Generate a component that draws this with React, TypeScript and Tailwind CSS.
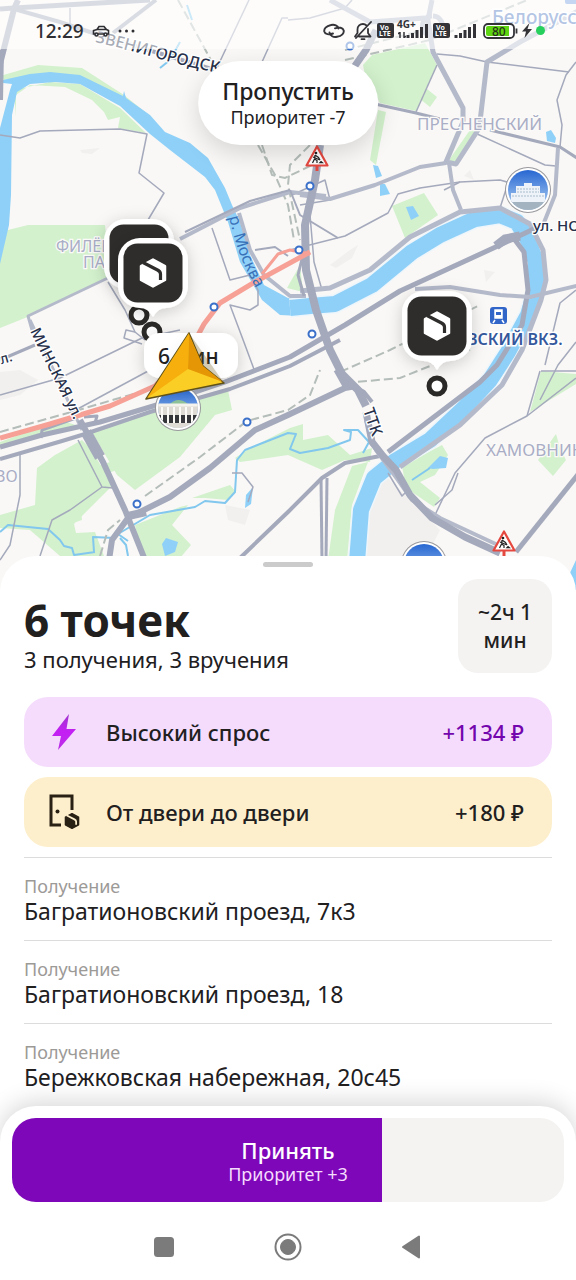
import type { ReactNode } from "react";

const park = "#d3f1cd";
const water = "#8fd0f8";
const road = "#a4a9bc";
const roadLight = "#b5bacb";

const parks = [
  "0,76 38,65 82,68 124,95 150,116 110,100 80,76 50,73 4,80",
  "16,117 16,95 30,85 65,87 92,100 104,112 108,120 120,117 118,128 146,133 120,108 80,84 50,82 14,90",
  "0,232 28,225 105,225 110,277 30,316 0,328",
  "363,65 372,55 425,43 437,65 416,111 380,103 365,75",
  "427,89 437,97 430,107 420,99",
  "378,110 386,112 376,165 370,160",
  "470,130 478,132 456,165 449,160",
  "392,206 424,193 438,215 405,238",
  "300,265 303,292 287,288",
  "92,432 155,408 215,392 228,390 232,410 215,415 180,457 135,490 117,475",
  "0,442 60,420 85,428 40,436 0,448",
  "0,515 35,505 37,468 55,455 82,440 92,450 112,486 74,524 76,533 95,532 104,556 60,556 30,530 0,528",
  "135,525 180,507 188,505 172,525 191,545 180,558 142,558",
  "192,498 230,485 236,492 228,500 205,498",
  "235,458 250,448 290,428 303,424 303,440 328,435 350,455 372,448 370,462 345,460 322,470 288,455 240,462",
  "352,466 368,462 352,505 347,560 328,560 335,510",
  "402,466 442,445 448,455 435,475 420,482 440,498 434,507 406,488",
  "541,371 576,374 576,384 530,412",
  "553,438 556,434 560,448 566,460 553,476 538,460",
];

const tints = [
  "80,150 100,148 92,154 82,153",
  "330,265 350,250 358,245 352,258 336,268",
  "380,470 365,500 364,560 425,560 440,530 400,490",
  "470,170 474,180 464,176",
  "484,270 495,272 486,282",
  "225,505 250,510 245,525 228,520",
  "0,372 20,370 38,380 20,395 0,400",
];

const thinRoads = [
  "0,135 20,138 40,131 120,129 147,134 139,173 164,193 148,220",
  "249,0 214,74", "288,18 282,18 262,62", "70,8 70,28",
  "288,20 310,18 345,8 352,0",
  "437,54 460,56 487,62 569,72", "437,65 416,112",
  "576,62 566,75 557,100 562,125 560,147",
  "475,133 545,165 556,166",
  "444,190 460,182 500,180 528,188",
  "509,180 500,208",
  "282,252 345,236 388,213 398,194 420,188 460,182",
  "212,228 230,280 250,275 258,290 258,305 250,310 230,305 245,345 255,372",
  "108,282 125,310 135,332 145,340", "135,332 126,330 124,338 142,344",
  "0,395 60,378 142,338 180,330", "72,412 150,370",
  "20,455 20,495 10,545 0,560",
  "78,440 102,487 113,488", "102,487 70,510 52,520 40,556",
  "232,473 242,473 253,487 248,502",
  "540,371 527,416", "541,371 576,371", "576,342 558,365 540,400",
  "576,290 560,303 545,365", "435,515 455,473 485,438 527,416 576,378",
  "458,473 452,490 435,505", "388,473 402,496 406,492",
  "292,195 325,180 330,200 300,205", "310,215 314,262 322,290",
];

const roads: { p: string; w: number; c?: string }[] = [
  { p: "0,9 14,8 150,0", w: 5 }, { p: "18,0 14,9 0,64", w: 6 }, { p: "1,50 0,100", w: 6 },
  { p: "14,9 60,22 105,37 215,70", w: 4 }, { p: "156,0 113,33", w: 4 },
  { p: "376,30 366,50 352,70 340,90", w: 7 },
  { p: "432,0 428,20 433,52 463,108 463,122 446,162 456,164 478,130", w: 5, c: roadLight },
  { p: "330,0 370,22 425,18", w: 5, c: roadLight },
  { p: "446,163 420,167 375,185 330,199 300,195", w: 4, c: roadLight },
  { p: "449,163 453,190 461,210", w: 4, c: roadLight },
  { p: "479,130 487,62 520,42 580,10", w: 5, c: roadLight },
  { p: "375,104 416,113 440,119", w: 3 }, { p: "490,130 560,147 580,160", w: 3 },
  { p: "558,148 555,195 543,225", w: 4, c: roadLight },
  { p: "180,239 240,208 290,192 326,196", w: 4, c: roadLight },
  { p: "185,232 250,201 290,190", w: 2 },
  { p: "239,213 250,250 264,275 290,296 306,296", w: 4, c: roadLight },
  { p: "255,250 275,247 288,256", w: 2 },
  { p: "290,190 300,215 338,238", w: 2 },
  { p: "110,277 28,316 32,330", w: 3, c: roadLight },
  { p: "30,320 70,405 82,430", w: 3, c: roadLight }, { p: "0,360 35,345", w: 3 },
  { p: "300,291 330,288 370,270 410,237 460,212 500,208 530,224 543,250 546,280 541,300 522,350 502,385 460,425 400,467", w: 5, c: roadLight },
  { p: "512,236 524,252 528,290 522,325 497,365 480,382 430,420 388,452", w: 5 },
  { p: "415,289 450,287 500,295 530,297 580,285", w: 4, c: roadLight },
  { p: "0,447 42,435 100,422 160,404 225,382 290,357 345,325 400,291 500,245 540,226", w: 5 },
  { p: "0,459 62,441 85,434 150,412 230,389 290,366 340,340", w: 4 },
  { p: "496,246 505,239 520,236", w: 9 },
  { p: "41,438 42,430 76,418", w: 3 }, { p: "95,423 97,416 84,417", w: 3 },
  { p: "80,420 92,442 103,462 125,510 145,560", w: 6 }, { p: "86,432 100,457", w: 11 },
  { p: "109,560 112,540 128,518 170,497 210,468 255,430 288,415 345,388 356,386", w: 6 },
  { p: "128,516 146,512", w: 8 },
  { p: "380,456 345,463 322,478 288,512 240,558", w: 4 },
  { p: "321,478 322,560", w: 3 }, { p: "327,478 326,560", w: 3 },
  { p: "580,472 516,552", w: 5 },
  { p: "366,420 376,450 398,480 412,500 440,518 500,546", w: 4, c: roadLight },
  { p: "336,370 345,386 352,387", w: 5 },
  { p: "320,145 315,180 305,225 306,270 316,310 330,350 342,374 358,390 366,406", w: 8 },
  { p: "303,255 298,275 304,296", w: 3 },
  { p: "366,412 372,442 383,456 396,470 410,495 432,518 465,537 500,553", w: 7 },
  { p: "372,402 364,392 354,386", w: 4 },
];

const dashes = [
  "178,0 212,62", "258,145 275,175 288,205 294,240", "262,145 272,175 285,178 312,165",
  "310,145 290,165 288,185 300,240", "345,60 430,40 576,-20", "345,50 425,30",
  "0,432 75,411 140,392", "145,496 200,457 247,421 288,410 310,395 320,370",
  "340,372 390,350 480,305", "345,383 400,378 470,350", "100,556 108,530 120,520",
];

const stations = [[350, 46], [310, 186], [299, 250], [214, 307], [312, 334], [247, 422], [137, 504]];

function Road({ p, w, c = road }: { p: string; w: number; c?: string }) {
  return <polyline points={p} fill="none" stroke={c} strokeWidth={w} strokeLinejoin="round" />;
}

function Cube({ x, y, s = 1, line = "#2f2d2b", fill = "#fff" }: { x: number; y: number; s?: number; line?: string; fill?: string }) {
  return (
    <g transform={`translate(${x} ${y}) scale(${s})`}>
      <path d="M0 -13.5L12 -7V7L0 13.5L-12 7V-7Z" fill={fill} stroke={fill} strokeWidth="2.5" strokeLinejoin="round" />
      <path d="M-10 -10.5L4.500 -3Q7.500 -1.500 7.500 1V7" fill="none" stroke={line} strokeWidth="3.2" />
    </g>
  );
}

function Pin({ x, y, cube = true }: { x: number; y: number; cube?: boolean }) {
  return (
    <g>
      <path
        filter="url(#shadow)"
        d={`M${x - 35} ${y - 13}a22 22 0 0 1 22 -22h26a22 22 0 0 1 22 22v26a22 22 0 0 1 -22 22q-8 0 -13 9q-5 -9 -13 -9a22 22 0 0 1 -22 -22z`}
        fill="#fff"
      />
      <rect x={x - 29.5} y={y - 29.5} width="59" height="59" rx="14" fill="#2f2d2b" />
      {cube && <Cube x={x} y={y} />}
    </g>
  );
}

function Landmark({ x, y, children }: { x: number; y: number; children?: ReactNode }) {
  return (
    <g transform={`translate(${x} ${y})`}>
      <circle r="23" fill="#98989c" />
      <circle r="22" fill="#fff" />
      <circle r="20" fill="url(#sky)" />
      <g clipPath="url(#disc)">{children}</g>
    </g>
  );
}

function Roadwork({ x, y }: { x: number; y: number }) {
  return (
    <g transform={`translate(${x} ${y})`}>
      <path d="M0 9V14" stroke="#e5483f" strokeWidth="3" />
      <path d="M0 -10.500L10.500 8.500H-10.500Z" fill="#fff" stroke="#e5483f" strokeWidth="2.200" strokeLinejoin="round" />
      <circle cx="-1" cy="-4" r="1.300" fill="#222" />
      <path d="M-2 -2L1.500 0.500L3 3M-2 -2L-2.500 2L-4.500 6M-2.500 2L0 3.500V6M-4 0L3 3" fill="none" stroke="#222" strokeWidth="1.200" />
      <path d="M1.500 6.200L4 3.800L7 6.200Z" fill="#222" />
    </g>
  );
}

function CityMap() {
  return (
    <svg viewBox="0 0 576 590" className="block w-full font-['Noto_Sans',sans-serif]" role="img" aria-label="Карта">
      <defs>
        <filter id="shadow" x="-50%" y="-50%" width="200%" height="200%">
          <feDropShadow dx="0" dy="3" stdDeviation="8" floodColor="#000" floodOpacity="0.18" />
        </filter>
        <linearGradient id="sky" x1="0" y1="0" x2="0" y2="1">
          <stop offset="0" stopColor="#2867d2" />
          <stop offset="1" stopColor="#b4d5f5" />
        </linearGradient>
        <clipPath id="disc"><circle r="20" /></clipPath>
        <path id="zven" d="M95 42Q130 50 160 59T235 76" />
        <path id="moscow" d="M229 217C236 245 241 262 258 292" />
        <path id="minsk" d="M30 331L76 424" />
        <path id="ttk" d="M363 410L375 445" />
      </defs>

      <rect width="576" height="590" fill="#f9f8f6" />
      {tints.map((p) => <polygon key={p} points={p} fill="#f2f0ee" />)}
      {parks.map((p) => <polygon key={p} points={p} fill={park} />)}
      <polygon points="110,462 118,470 100,475 88,505 80,500 82,520 76,522 70,500 84,470" fill={park} />

      <g fill={water}>
        <path d="M3 80L30 74L50 72L80 75L123 96L124 91L126 98L150 115L165 132L190 143L208 158L225 188L232 205L240 222L250 255L264 285L288 298L300 300V316L280 315L262 300L240 262L228 222L215 190L205 177L170 150L150 134L120 106L80 84L55 82L30 84L17 92L12 115L11 195L9 225L0 264V128L10 90L12 84L3 83Z" />
        <polygon points="373,165 378,166 382,176 376,178" />
        <polygon points="380,184 385,184 390,194 380,196" />
        <polygon points="406,207 413,206 419,216 411,220" />
        <polygon points="546,132 551,130 556,138 555,143 547,141" />
        <polygon points="162,544 166,538 178,542 175,552 165,556" />
        <polygon points="246,495 253,487 251,504 245,508" />
        <polygon points="428,468 440,456 448,458 446,468 433,469" />
        <polygon points="562,590 576,560 576,590" />
      </g>
      <g fill="none" strokeLinejoin="round">
        <path d="M290 308L310 306L335 304L372 285L412 252L440 235L475 219L500 215L517 222L528 240L536 262V288L528 315L508 352L490 380L465 407L430 440L395 461L374 478L361 510L357 562" stroke="#eef6fb" strokeWidth="19" />
        <path d="M290 308L310 306L335 304L372 285L412 252L440 235L475 219L500 215L517 222L528 240L536 262V288L528 315L508 352L490 380L465 407L430 440L395 461L374 478L361 510L357 562" stroke={water} strokeWidth="16" />
        <path d="M0 532L8 525L48 529L60 540L64 546L72 548L74 555L95 552M118 534L128 541M94 552L93 537L115 538M118 534L150 515L195 507L205 501L225 503L235 492L237 460L245 450L288 433L296 434L290 449L300 453L328 448L350 440L351 432L344 430L358 430L369 442L363 453M412 480L430 468M120 538L126 545L128 556M160 68L170 60L180 42M187 5L192 20" stroke="#81c7ee" strokeWidth="2" />
      </g>

      {thinRoads.map((p) => <Road key={p} p={p} w={1.5} />)}
      {dashes.map((p) => (
        <polyline key={p} points={p} fill="none" stroke="#b4bdb9" strokeWidth="2" strokeDasharray="9 4" />
      ))}
      {roads.map((r) => <Road key={r.p} {...r} />)}
      <path d="M433 16A10 10 0 1 1 432 16" stroke={roadLight} strokeWidth="5" fill="none" />
      <g fill="none" stroke="#f6a096" strokeLinejoin="round">
        <path d="M0 438L50 424L110 406L155 386L190 350L204 324L220 303L255 282L310 252" strokeWidth="5" />
        <path d="M262 274L278 254L290 250L310 254" strokeWidth="3" />
      </g>
      {stations.map(([x, y]) => (
        <circle key={`${x}-${y}`} cx={x} cy={y} r="3.500" fill="#fff" stroke="#3a70c9" strokeWidth="2" />
      ))}

      <g fill="#a9adc5" stroke="#fbfaf9" strokeWidth="2.500" paintOrder="stroke" fontSize="17">
        <text x="417" y="130">ПРЕСНЕНСКИЙ</text>
        <text x="486" y="456">ХАМОВНИКИ</text>
        <text x="56" y="252" fontSize="16">ФИЛЁВСКИЙ</text>
        <text x="83" y="268" fontSize="16">ПАРК</text>
        <text x="-5" y="482" fontSize="16">ВО</text>
      </g>
      <g fill="#27304a" stroke="#fff" strokeWidth="2.500" paintOrder="stroke" fontSize="15" fontWeight="500">
        <text fontSize="16"><textPath href="#zven">ЗВЕНИГОРОДСК</textPath></text>
        <text><textPath href="#minsk">МИНСКАЯ ул.</textPath></text>
        <text fontSize="16"><textPath href="#ttk">ТТК</textPath></text>
        <text x="533" y="231">ул. НОВЫЙ</text>
        <text transform="translate(-5 366) rotate(-16)" fontSize="14">ул.</text>
      </g>
      <text fontSize="16" fill="#3870b8"><textPath href="#moscow">р. Москва</textPath></text>
      <g fill="#35589c" stroke="#fff" strokeWidth="3" paintOrder="stroke" fontWeight="600">
        <text x="492" y="24" fontSize="19" fontWeight="500" fill="#4470bc">Белорусская</text>
        <text x="467" y="345" fontSize="16">ВСКИЙ ВКЗ.</text>
      </g>
      <rect x="490" y="307" width="17" height="17" rx="3" fill="#3265c8" />
      <path d="M495 310h7v8h-7zM495 320l-2 3M502 320l2 3" fill="#fff" stroke="#fff" strokeWidth="1.500" />
      <path d="M496 312h5v3h-5z" fill="#3265c8" />
      <rect x="565" y="-4" width="14" height="8" rx="2" fill="#6f9ae0" />

      <Roadwork x={317} y={157} />
      <Roadwork x={504} y={542} />
      <Landmark x={528} y={190}>
        <path d="M-20 10H20V20H-20Z" fill="#a4b3c0" />
        <path d="M-12 -4H12V11H-12ZM-17 3H17V12H-17Z" fill="#edf3f8" />
        <path d="M-4 -7H4V-4H-4Z" fill="#edf3f8" />
        <path d="M-11 -1H11M-11 2H11M-16 6H16" stroke="#a9bccc" strokeWidth="1" strokeDasharray="2 1" />
      </Landmark>
      <Landmark x={178} y={408}>
        <path d="M-8 -4Q0 -12 10 -4Z" fill="#8fc39a" />
        <path d="M-20 -4H20V20H-20Z" fill="#dedbd4" />
        <path d="M-20 7H20V15H-20Z" fill="#34363a" />
        <path d="M-16 -1V15M-10 -1V15M-4 -1V15M2 -1V15M8 -1V15M14 -1V15" stroke="#fbfaf6" strokeWidth="2" />
        <path d="M-20 -3H20" stroke="#f5f3ee" strokeWidth="3" />
      </Landmark>
      <Landmark x={424} y={564} />

      <g fill="#fff" stroke="#2b2927" strokeWidth="5">
        <circle cx="139" cy="315" r="8" />
        <circle cx="152" cy="332" r="8" />
        <circle cx="437" cy="386" r="8" />
      </g>
      <Pin x={139} y={254} cube={false} />
      <Pin x={153} y={273} />
      <Pin x={437} y={326} />

      <rect x="144" y="333" width="94" height="45" rx="16" fill="#fff" filter="url(#shadow)" />
      <text x="158" y="364" fontSize="21" fontWeight="500" fill="#21201f">6 мин</text>
      <g strokeLinejoin="round">
        <path d="M189 333L146 399L224 383Z" fill="#6b5413" opacity="0.300" filter="url(#shadow)" />
        <path d="M189 333L203 366L224 383L146 399Z" fill="#fbce26" stroke="#5f5118" strokeWidth="1.500" />
        <path d="M189 333L188 369L147 398Z" fill="#f6af0c" />
        <path d="M189 334L203 366L223 382L188 369Z" fill="#e59604" />
      </g>
    </svg>
  );
}

function Volte() {
  return (
    <svg width="17" height="15" viewBox="0 0 17 15" aria-hidden="true">
      <rect width="17" height="15" rx="2" fill="#333338" />
      <g fill="#fff" fontSize="7" fontWeight="700" fontFamily="Noto Sans, sans-serif">
        <text x="3" y="7">Vo</text>
        <text x="2" y="13">LTE</text>
      </g>
    </svg>
  );
}

function Bars() {
  return (
    <svg width="23" height="15" viewBox="0 0 23 15" aria-hidden="true">
      <path d="M2 15V12M6.500 15V10M11 15V7M15.500 15V4M20.500 15V1" stroke="#333338" strokeWidth="3" />
    </svg>
  );
}

function StatusBar() {
  return (
    <div className="absolute inset-x-0 top-0 flex h-[49px] items-center justify-between bg-white/60 pr-[31px] pl-[35px] pt-3">
      <div className="flex items-center gap-2 text-[#2f2f33]">
        <span className="text-[19px] leading-6 font-medium">12:29</span>
        <svg width="18" height="12" viewBox="0 0 18 12" fill="none" stroke="currentColor" strokeWidth="1.600" aria-hidden="true">
          <path d="M3 9H1.500V5.500L5 4.500L7 1.500H12L14.500 4.500L16.500 5.500V9H15M6 9H12M5 4.500H14" />
          <circle cx="4.500" cy="9.500" r="1.500" />
          <circle cx="13.500" cy="9.500" r="1.500" />
        </svg>
        <svg width="17" height="4" viewBox="0 0 17 4" fill="currentColor" aria-hidden="true">
          <circle cx="2" cy="2" r="1.500" /><circle cx="8.500" cy="2" r="1.500" /><circle cx="15" cy="2" r="1.500" />
        </svg>
      </div>
      <div className="flex items-center gap-1">
        <svg width="22" height="16" viewBox="0 0 22 16" fill="none" stroke="#333338" strokeWidth="1.900" strokeLinecap="round" className="mr-1" aria-hidden="true">
          <path d="M15.500 5.500C15 2.500 11.500 1.200 8 2C3 3 0.800 6 1.300 8.500C2 11.500 6 12 10 10.500" />
          <path d="M6.500 9.500C7 13 10.500 14.500 14 13.800C19 13 21.200 10 20.700 7.500C20 4.500 16 4 12 5.300" />
        </svg>
        <svg width="20" height="19" viewBox="0 0 20 19" fill="none" stroke="#333338" strokeWidth="1.800" strokeLinecap="round" aria-hidden="true">
          <path d="M6 15.500H17M2 15.500L4.500 12V8.500C4.500 5 7 3 10 3C11.500 3 12.500 3.500 13.500 4.500M15 8V12L17.500 15.500M8.500 18.200H11.500M18 1L3 17" />
        </svg>
        <Volte />
        <div className="relative flex h-[15px] items-end pl-2">
          <span className="absolute -top-1 -left-px text-[10px] leading-none font-bold text-[#333338]">4G+</span>
          <svg width="8" height="6" viewBox="0 0 8 6" className="absolute bottom-0 left-0" aria-hidden="true">
            <path d="M2 0V6M0 2L2 0M6 0V6M8 4L6 6" stroke="#333338" strokeWidth="1.500" />
          </svg>
          <Bars />
        </div>
        <Volte />
        <Bars />
        <svg width="35" height="16" viewBox="0 0 35 16" className="ml-0.5" aria-hidden="true">
          <rect x="1" y="1" width="30" height="14" rx="4" fill="#fff" stroke="#333338" strokeWidth="1.800" />
          <path d="M3 5a2 2 0 0 1 2 -2H26V13H5a2 2 0 0 1 -2 -2Z" fill="#5fd412" />
          <path d="M33.500 5.500V10.500" stroke="#333338" strokeWidth="1.800" />
          <text x="9" y="12.500" fontSize="12" fontWeight="500" fill="#24301c" fontFamily="Noto Sans, sans-serif">80</text>
        </svg>
        <svg width="10" height="15" viewBox="0 0 10 15" aria-hidden="true">
          <path d="M7.500 0L0 8.500H4L2.500 15L10 6H5.500Z" fill="#333338" />
        </svg>
        <span className="h-[9px] w-[9px] rounded-full bg-[#27cf5d]" />
      </div>
    </div>
  );
}

function Bonus({ icon, label, amount, tone }: { icon: ReactNode; label: string; amount: string; tone: string }) {
  return (
    <li className={`flex h-[70px] items-center rounded-[24px] pr-7 pl-6 ${tone}`}>
      <span className="flex w-[58px] shrink-0">{icon}</span>
      <span className="grow text-[22px] leading-7 font-medium text-[#21201f]">{label}</span>
      <span className="text-[22px] leading-7 font-medium">{amount}</span>
    </li>
  );
}

const stops = [
  "Багратионовский проезд, 7к3",
  "Багратионовский проезд, 18",
  "Бережковская набережная, 20с45",
];

export default function App() {
  return (
    <div className="flex min-h-screen flex-col bg-white font-['Noto_Sans',sans-serif] text-[#21201f]">
      <header className="relative">
        <CityMap />
        <StatusBar />
        <button
          type="button"
          className="absolute top-[61px] left-1/2 flex h-[84px] -translate-x-1/2 flex-col items-center justify-center rounded-full bg-white px-6 whitespace-nowrap shadow-[0_8px_24px_rgba(0,0,0,0.14)]"
        >
          <span className="text-[23px] leading-7 font-medium">Пропустить</span>
          <span className="text-[18px] leading-6">Приоритет -7</span>
        </button>
      </header>

      <main className="relative -mt-[34px] rounded-t-[36px] bg-white px-6">
        <div className="mx-auto mt-1.5 h-[5px] w-[50px] rounded-full bg-[#cbcbcb]" />
        <div className="mt-3 flex items-start justify-between">
          <div className="pt-4">
            <h1 className="text-[44px] leading-[50px] font-bold">6 точек</h1>
            <p className="text-[22px] leading-7">3 получения, 3 вручения</p>
          </div>
          <p className="flex h-[94px] w-[94px] items-center justify-center rounded-[20px] bg-[#f4f3f2] px-3 text-center text-[21px] leading-7 font-medium">
            ~2ч 1 мин
          </p>
        </div>
        <ul className="mt-6 flex flex-col gap-2.5">
          <Bonus
            tone="bg-[#f5dcfd] text-[#7306ad]"
            label="Высокий спрос"
            amount="+1134 ₽"
            icon={
              <svg width="32" height="40" viewBox="0 0 32 40" aria-hidden="true">
                <defs>
                  <linearGradient id="bolt" x1="0" y1="0" x2="0" y2="1">
                    <stop offset="0" stopColor="#9f35cc" /><stop offset="0.500" stopColor="#c41ff4" /><stop offset="1" stopColor="#b92fe4" />
                  </linearGradient>
                </defs>
                <path d="M21 2L4 24H13L10 38L28 17H18.500Z" fill="url(#bolt)" />
              </svg>
            }
          />
          <Bonus
            tone="bg-[#fdefcb] text-[#21201f]"
            label="От двери до двери"
            amount="+180 ₽"
            icon={
              <svg width="34" height="38" viewBox="0 0 34 38" aria-hidden="true">
                <path d="M13 32H3V3H24V17" fill="none" stroke="#2a2115" strokeWidth="3" />
                <circle cx="9.500" cy="18.500" r="2" fill="#2a2115" />
                <Cube x={24} y={28} s={0.55} fill="#2a2115" line="#fdefcb" />
              </svg>
            }
          />
        </ul>
        <ol className="mt-2.5">
          {stops.map((stop) => (
            <li key={stop} className="border-t border-[#dcdcdc] pt-4 pb-4">
              <p className="text-[18px] leading-6 text-[#9c9a97]">Получение</p>
              <p className="text-[23px] leading-[26px]">{stop}</p>
            </li>
          ))}
        </ol>
      </main>

      <footer className="relative grow rounded-t-[36px] bg-white px-3 pt-3 shadow-[0_-4px_24px_rgba(0,0,0,0.16)]">
        <button type="button" className="relative block h-[84px] w-full overflow-hidden rounded-[24px] bg-[#f4f3f2] text-center text-white">
          <span className="absolute inset-y-0 left-0 w-[67%] bg-[#7e07ba]" />
          <span className="relative flex flex-col">
            <span className="text-[22px] leading-7 font-medium">Принять</span>
            <span className="text-[18px] leading-5 text-[#f5dcfd]">Приоритет +3</span>
          </span>
        </button>
        <nav className="mx-auto flex w-[270px] items-center justify-between pt-[30px] pb-4 text-[#7b7b7b]">
          <button type="button" aria-label="Недавние" className="flex">
            <svg width="22" height="30" viewBox="0 0 22 30"><rect x="1" y="5" width="20" height="20" rx="3.500" fill="currentColor" /></svg>
          </button>
          <button type="button" aria-label="Домой" className="flex">
            <svg width="30" height="30" viewBox="0 0 30 30" fill="none" stroke="currentColor">
              <circle cx="15" cy="15" r="12.500" strokeWidth="2" />
              <circle cx="15" cy="15" r="7.500" fill="currentColor" />
            </svg>
          </button>
          <button type="button" aria-label="Назад" className="flex">
            <svg width="22" height="30" viewBox="0 0 22 30"><path d="M2 15L18 4.500V25.500Z" fill="currentColor" stroke="currentColor" strokeWidth="2" strokeLinejoin="round" /></svg>
          </button>
        </nav>
      </footer>
    </div>
  );
}
